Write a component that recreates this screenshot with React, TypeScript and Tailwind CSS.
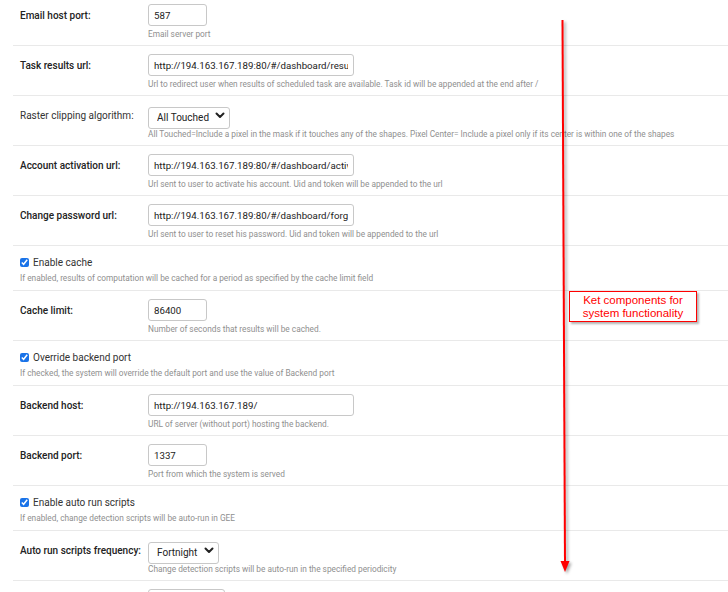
import { ReactNode } from 'react';

type FieldProps = {
  label: string;
  help: string;
  bold?: boolean;
  children: ReactNode;
};

function Field({ label, help, bold = true, children }: FieldProps) {
  return (
    <div className="border-b border-[#e9e9e9] pl-[7px] pt-[8px] pb-[5px]">
      <div className="grid grid-cols-[128px_1fr] items-center">
        <label
          className={`pt-[2px] text-[10px] leading-[12px] ${bold ? 'font-medium text-[#222]' : 'font-normal text-[#333]'}`}
        >
          {label}
        </label>
        <div>{children}</div>
        <div />
        <p className="mt-[2px] text-[8.3px] leading-[12px] text-[#8f8f8f] whitespace-nowrap">{help}</p>
      </div>
    </div>
  );
}

function CheckField({ label, help }: { label: string; help: string }) {
  return (
    <div className="border-b border-[#e9e9e9] pl-[7px] pt-[8px] pb-[6px]">
      <label className="flex items-center gap-[4px] h-[16px] text-[10px] text-[#333]">
        <input type="checkbox" defaultChecked className="w-[9px] h-[9px] m-0 accent-[#1a73e8]" />
        {label}
      </label>
      <p className="mt-[2px] text-[8.3px] leading-[12px] text-[#8f8f8f] whitespace-nowrap">{help}</p>
    </div>
  );
}

function TextInput({ value, width }: { value: string; width: string }) {
  return (
    <input
      defaultValue={value}
      className={`${width} h-[22px] block rounded-[3px] border border-[#c8c8c8] px-[5px] text-[9.7px] text-[#222] outline-none`}
    />
  );
}

function Select({ value, width, options }: { value: string; width: string; options: string[] }) {
  return (
    <div className={`relative ${width} h-[22px]`}>
      <select
        defaultValue={value}
        className="w-full h-full appearance-none rounded-[3px] border border-[#c8c8c8] bg-white pl-[8px] text-[10px] text-[#222] outline-none"
      >
        {options.map((o) => (
          <option key={o}>{o}</option>
        ))}
      </select>
      <svg
        className="absolute right-[5px] top-[7px] w-[10px] h-[8px] pointer-events-none"
        viewBox="0 0 10 8"
        fill="none"
        stroke="#222"
        strokeWidth="2"
        strokeLinecap="round"
        strokeLinejoin="round"
      >
        <path d="M1.5 2.5 5 6 8.5 2.5" />
      </svg>
    </div>
  );
}

export default function App() {
  return (
    <div className="relative h-[592px] overflow-hidden bg-white" style={{ fontFamily: 'Roboto, "Noto Sans", sans-serif' }}>
      <div className="ml-[13px] -mt-[4px]">
        <Field label="Email host port:" help="Email server port">
          <TextInput value="587" width="w-[59px]" />
        </Field>
        <Field
          label="Task results url:"
          help="Url to redirect user when results of scheduled task are available. Task id will be appended at the end after /"
        >
          <TextInput value="http://194.163.167.189:80/#/dashboard/results" width="w-[206px]" />
        </Field>
        <Field
          label="Raster clipping algorithm:"
          bold={false}
          help="All Touched=Include a pixel in the mask if it touches any of the shapes. Pixel Center= Include a pixel only if its center is within one of the shapes"
        >
          <Select value="All Touched" width="w-[82px]" options={['All Touched', 'Pixel Center']} />
        </Field>
        <Field
          label="Account activation url:"
          help="Url sent to user to activate his account. Uid and token will be appended to the url"
        >
          <TextInput value="http://194.163.167.189:80/#/dashboard/activate" width="w-[206px]" />
        </Field>
        <Field
          label="Change password url:"
          help="Url sent to user to reset his password. Uid and token will be appended to the url"
        >
          <TextInput value="http://194.163.167.189:80/#/dashboard/forgot-password" width="w-[206px]" />
        </Field>
        <CheckField
          label="Enable cache"
          help="If enabled, results of computation will be cached for a period as specified by the cache limit field"
        />
        <Field label="Cache limit:" help="Number of seconds that results will be cached.">
          <TextInput value="86400" width="w-[59px]" />
        </Field>
        <CheckField
          label="Override backend port"
          help="If checked, the system will override the default port and use the value of Backend port"
        />
        <Field label="Backend host:" help="URL of server (without port) hosting the backend.">
          <TextInput value="http://194.163.167.189/" width="w-[206px]" />
        </Field>
        <Field label="Backend port:" help="Port from which the system is served">
          <TextInput value="1337" width="w-[59px]" />
        </Field>
        <CheckField
          label="Enable auto run scripts"
          help="If enabled, change detection scripts will be auto-run in GEE"
        />
        <Field
          label="Auto run scripts frequency:"
          help="Change detection scripts will be auto-run in the specified periodicity"
        >
          <Select value="Fortnight" width="w-[71px]" options={['Daily', 'Weekly', 'Fortnight', 'Monthly']} />
        </Field>
        {/* next row, only its input's top edge is in view */}
        <div className="pl-[7px] pt-[8px]">
          <div className="ml-[128px] w-[77px] h-[22px] rounded-[3px] border border-[#c8c8c8]" />
        </div>
      </div>

      {/* annotation arrow */}
      <svg
        className="absolute left-0 top-0 pointer-events-none drop-shadow-[2px_2px_1.5px_rgba(0,0,0,0.35)]"
        width="728"
        height="592"
      >
        <line x1="562.5" y1="20" x2="565" y2="562" stroke="#ff0000" strokeWidth="2" />
        <path d="M560.5 561 L569.5 561 L565 572 Z" fill="#ff0000" />
      </svg>

      {/* annotation callout */}
      <div className="absolute left-[569px] top-[291px] w-[128px] h-[31px] border border-[#ff0000] bg-white shadow-[2px_2px_2px_rgba(0,0,0,0.3)] flex flex-col items-center justify-center">
        <p
          className="text-center text-[11.5px] leading-[12.5px] text-[#ff0000]"
          style={{ fontFamily: '"Liberation Sans", Arial, sans-serif' }}
        >
          Ket components for
          <br />
          system functionality
        </p>
      </div>
    </div>
  );
}
